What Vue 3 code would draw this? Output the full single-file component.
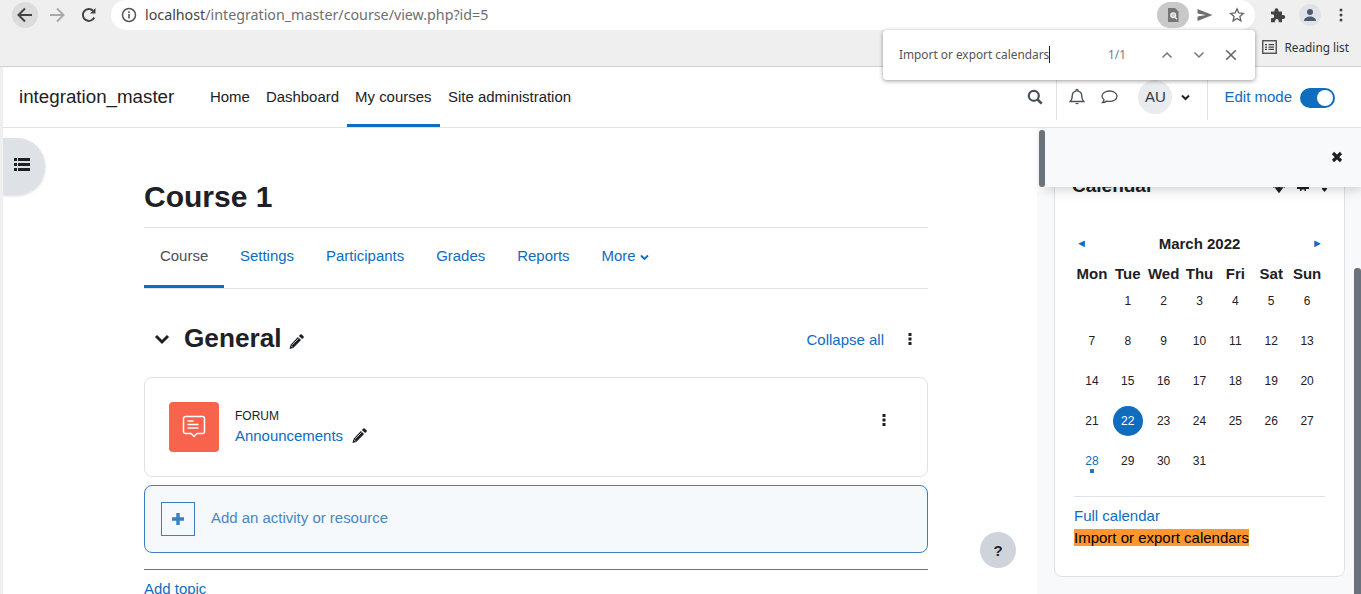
<script setup>
const navItems = [
  { label: 'Home' },
  { label: 'Dashboard' },
  { label: 'My courses', active: true },
  { label: 'Site administration' },
]
const tabs = ['Course', 'Settings', 'Participants', 'Grades', 'Reports']
const weekdays = ['Mon', 'Tue', 'Wed', 'Thu', 'Fri', 'Sat', 'Sun']
const days = ['', ...Array.from({ length: 31 }, (_, i) => i + 1)]
</script>

<template>
  <div class="screen">
    <header class="chrome">
      <div class="toolbar">
        <button class="round back">
          <svg width="18" height="18" viewBox="0 0 18 18"><path d="M16 9H3M9 2.500 2.500 9 9 15.500" fill="none" stroke="#444" stroke-width="2"/></svg>
        </button>
        <button class="round fwd">
          <svg width="18" height="18" viewBox="0 0 18 18"><path d="M2 9h13M9 2.500 15.500 9 9 15.500" fill="none" stroke="#aaa" stroke-width="2"/></svg>
        </button>
        <button class="round reload">
          <svg width="18" height="18" viewBox="0 0 18 18"><path d="M14.300 11.500A6 6 0 1 1 13.200 4.700" fill="none" stroke="#444" stroke-width="2"/><path d="M15.500 2v5.500H10z" fill="#444"/></svg>
        </button>
        <div class="omnibox">
          <svg class="info" width="16" height="16" viewBox="0 0 16 16"><circle cx="8" cy="8" r="6.500" fill="none" stroke="#555" stroke-width="1.500"/><path d="M7.200 7h1.600v4.500H7.200zM7.200 4.300h1.600v1.600H7.200z" fill="#555"/></svg>
          <span class="url"><span class="host">localhost</span>/integration_master/course/view.php?id=5</span>
          <span class="omni-actions">
            <span class="find-pill">
              <svg width="16" height="16" viewBox="0 0 16 16"><path d="M3 1h7l3.500 3.500V15H3z" fill="#757575"/><circle cx="8.200" cy="8.300" r="2.400" fill="#c9c9c9" stroke="#eee" stroke-width="1.300"/><path d="m10 10.200 2 2" stroke="#eee" stroke-width="1.300"/></svg>
            </span>
            <span class="omni-icon">
              <svg width="16" height="16" viewBox="0 0 16 16"><path d="M.5 2 15.500 8 .5 14V9.500L9 8 .5 6.500z" fill="#6e6e6e"/></svg>
            </span>
            <span class="omni-icon">
              <svg width="16" height="16" viewBox="0 0 16 16"><path d="m8 1.800 1.800 4.200 4.500.4-3.400 3 1 4.400L8 11.500l-3.900 2.300 1-4.400-3.400-3 4.500-.4z" fill="none" stroke="#5f6368" stroke-width="1.300"/></svg>
            </span>
          </span>
        </div>
        <div class="ext">
          <svg width="16" height="16" viewBox="0 0 16 16"><path d="M1 4.500h3.500V3.200a2 2 0 0 1 4 0v1.300H12V8h1.200a2 2 0 0 1 0 4H12v3.200H8.700v-1.300a1.800 1.800 0 0 0-3.600 0v1.300H1v-4h1.200a2 2 0 0 0 0-4H1z" fill="#444"/></svg>
          <span class="profile">
            <svg width="14" height="14" viewBox="0 0 14 14"><circle cx="7" cy="4" r="3" fill="#4d5a70"/><path d="M1 13c0-3 3-4.500 6-4.500s6 1.500 6 4.500z" fill="#4d5a70"/></svg>
          </span>
          <svg width="4" height="14" viewBox="0 0 4 14"><circle cx="2" cy="2" r="1.500" fill="#444"/><circle cx="2" cy="7" r="1.500" fill="#444"/><circle cx="2" cy="12" r="1.500" fill="#444"/></svg>
        </div>
      </div>
      <div class="bookmarks">
        <svg width="15" height="14" viewBox="0 0 15 14"><rect x=".75" y=".75" width="13.500" height="12.500" fill="none" stroke="#444" stroke-width="1.300"/><path d="M3 4h2v1.300H3zM6.500 4H12v1.300H6.500zM3 6.400h2v1.300H3zM6.500 6.400H12v1.300H6.500zM3 8.800h2v1.300H3zM6.500 8.800H12v1.300H6.500z" fill="#444"/></svg>
        <span>Reading list</span>
      </div>
    </header>

    <div class="findbar">
      <span class="find-text">Import or export calendars</span>
      <span class="find-count">1/1</span>
      <span class="find-sep"></span>
      <svg class="find-btn" width="12" height="8" viewBox="0 0 12 8"><path d="M1.500 6.500 6 2l4.500 4.500" fill="none" stroke="#777" stroke-width="1.500"/></svg>
      <svg class="find-btn" width="12" height="8" viewBox="0 0 12 8"><path d="M1.500 1.500 6 6l4.500-4.500" fill="none" stroke="#777" stroke-width="1.500"/></svg>
      <svg class="find-btn" width="12" height="12" viewBox="0 0 12 12"><path d="m1.200 1.200 9.600 9.600M10.800 1.200l-9.600 9.600" fill="none" stroke="#666" stroke-width="1.600"/></svg>
    </div>

    <div class="page">
      <nav class="navbar">
        <span class="brand">integration_master</span>
        <ul class="primary">
          <li v-for="item in navItems" :key="item.label" :class="{ active: item.active }">{{ item.label }}</li>
        </ul>
        <div class="nav-right">
          <svg class="search" width="16" height="16" viewBox="0 0 16 16"><circle cx="6.800" cy="6.800" r="5" fill="none" stroke="#495057" stroke-width="2.200"/><path d="m10.500 10.500 4.200 4.200" stroke="#495057" stroke-width="2.600"/></svg>
          <span class="nav-sep"></span>
          <svg class="bell" width="16" height="18" viewBox="0 0 16 18"><path d="M8 1.500a1 1 0 0 1 1 1v.6c2.400.5 3.700 2.500 3.700 4.700 0 3.200.8 4.300 2 5.700H1.300c1.200-1.400 2-2.500 2-5.700 0-2.200 1.300-4.200 3.700-4.700v-.6a1 1 0 0 1 1-1z" fill="none" stroke="#495057" stroke-width="1.400"/><path d="M6.200 15a1.900 1.900 0 0 0 3.600 0z" fill="#495057"/></svg>
          <svg class="chat" width="17" height="14" viewBox="0 0 17 14"><path d="M8.500 1C4.500 1 1 3.300 1 6.300c0 1.400.8 2.600 2 3.500-.2 1-.8 2-1.500 2.800 1.500-.1 3-.7 4.200-1.500.9.200 1.800.3 2.800.3 4 0 7.500-2.100 7.500-5.100S12.500 1 8.500 1z" fill="none" stroke="#495057" stroke-width="1.300"/></svg>
          <span class="avatar">AU</span>
          <svg class="caret" width="9" height="7" viewBox="0 0 9 7"><path d="m1 1.500 3.500 3.500L8 1.500" fill="none" stroke="#1d2125" stroke-width="2"/></svg>
          <span class="nav-sep second"></span>
          <span class="edit-label">Edit mode</span>
          <span class="toggle"><span class="knob"></span></span>
        </div>
      </nav>

      <div class="body">
        <main class="main">
          <div class="drawer-toggle">
            <svg width="16" height="13" viewBox="0 0 16 13"><path d="M0 0h3v3H0zM4 0h12v3H4zM0 5h3v3H0zM4 5h12v3H4zM0 10h3v3H0zM4 10h12v3H4z" fill="#1d2125"/></svg>
          </div>
          <h1 class="title">Course 1</h1>
          <div class="tabs">
            <span v-for="(t, i) in tabs" :key="t" class="tab" :class="{ current: i === 0 }">{{ t }}</span>
            <span class="tab">More
              <svg width="9" height="7" viewBox="0 0 9 7"><path d="m1 1.500 3.500 3.500L8 1.500" fill="none" stroke="#0f6cbf" stroke-width="1.800"/></svg>
            </span>
          </div>
          <div class="section-head">
            <svg class="sec-caret" width="16" height="11" viewBox="0 0 16 11"><path d="m2 2 6 6 6-6" fill="none" stroke="#1d2125" stroke-width="3"/></svg>
            <h2 class="section-title">General</h2>
            <svg class="pencil" width="15" height="15" viewBox="0 0 15 15"><path d="M11.300.5a1 1 0 0 1 1.400 0l1.800 1.800a1 1 0 0 1 0 1.400l-1.400 1.400-3.200-3.200z" fill="#1d2125"/><path d="M8.900 2.900l3.200 3.200-7.800 7.800-3.800 1 .9-3.900z" fill="#1d2125"/><path d="M9.500 4.500l-6.300 6.300" stroke="#fff" stroke-width=".7"/><path d="M1.500 11.200l2.300 2.300" stroke="#fff" stroke-width=".7"/></svg>
            <span class="collapse">Collapse all</span>
            <svg class="kebab" width="4" height="14" viewBox="0 0 4 14"><path d="M.5 1h3v3h-3zM.5 5.500h3v3h-3zM.5 10h3v3h-3z" fill="#1d2125"/></svg>
          </div>
          <div class="activity">
            <div class="act-icon">
              <svg width="24" height="24" viewBox="0 0 24 24"><path d="M3.500 1.500h17a2 2 0 0 1 2 2v13a2 2 0 0 1-2 2h-5.500L12 21.500l-3-3H3.500a2 2 0 0 1-2-2v-13a2 2 0 0 1 2-2z" fill="none" stroke="#fff" stroke-width="1.500"/><path d="M5.500 6h6M5.500 9.500h11M5.500 13h11" stroke="#fff" stroke-width="1.500"/></svg>
            </div>
            <div class="act-text">
              <div class="act-type">FORUM</div>
              <div class="act-name">Announcements
                <svg width="15" height="15" viewBox="0 0 15 15"><path d="M11.300.5a1 1 0 0 1 1.400 0l1.800 1.800a1 1 0 0 1 0 1.400l-1.400 1.400-3.200-3.200z" fill="#1d2125"/><path d="M8.900 2.900l3.200 3.200-7.800 7.800-3.800 1 .9-3.900z" fill="#1d2125"/><path d="M9.500 4.500l-6.300 6.300" stroke="#fff" stroke-width=".7"/><path d="M1.500 11.200l2.300 2.300" stroke="#fff" stroke-width=".7"/></svg>
              </div>
            </div>
            <svg class="act-kebab" width="4" height="14" viewBox="0 0 4 14"><path d="M.5 1h3v3h-3zM.5 5.500h3v3h-3zM.5 10h3v3h-3z" fill="#1d2125"/></svg>
          </div>
          <div class="add-activity">
            <span class="plus-box">
              <svg width="14" height="14" viewBox="0 0 14 14"><path d="M7 1v12M1 7h12" stroke="#3a80c0" stroke-width="3.400"/></svg>
            </span>
            <span class="add-label">Add an activity or resource</span>
          </div>
          <div class="add-topic">Add topic</div>
          <div class="help">?</div>
        </main>

        <aside class="drawer">
          <div class="block">
            <div class="block-head">
              <h3>Calendar</h3>
              <svg class="head-move" width="12" height="16" viewBox="0 0 12 16"><path d="M6 0v14M3 11l3 4 3-4z" stroke="#1d2125" stroke-width="1.500" fill="#1d2125"/><path d="M0 10h1.500M10.500 10H12" stroke="#1d2125"/></svg>
              <svg class="head-gear" width="12" height="14" viewBox="0 0 12 14"><path d="M0 10h12v2H9v2H7.500v-1.500h-3V14H3v-2H0z" fill="#1d2125"/></svg>
              <svg class="head-caret" width="5" height="4" viewBox="0 0 5 4"><path d="M0 0h5v1L2.500 4 0 1z" fill="#1d2125"/></svg>
            </div>
            <div class="month">
              <span class="arrow">◄</span>
              <span>March 2022</span>
              <span class="arrow">►</span>
            </div>
            <div class="cal">
              <span v-for="w in weekdays" :key="w" class="wd">{{ w }}</span>
              <span v-for="(d, i) in days" :key="i" class="day" :class="{ today: d === 22, event: d === 28 }">
                <span class="num">{{ d }}</span>
              </span>
            </div>
            <div class="block-foot">
              <div class="foot-link">Full calendar</div>
              <div class="foot-match"><mark>Import or export calendars</mark></div>
            </div>
          </div>
        </aside>

        <div class="drawer-head">
          <svg width="12" height="12" viewBox="0 0 12 12"><path d="m2 2 8 8M10 2l-8 8" stroke="#1d2125" stroke-width="3.200"/></svg>
        </div>
        <span class="thumb-a"></span>
        <span class="thumb-b"></span>
      </div>
    </div>
  </div>
</template>

<style>
html, body { margin: 0; overflow: hidden; background: #efefef; }
</style>

<style scoped>
.screen {
  position: relative;
  width: 1361px;
  height: 594px;
  overflow: hidden;
  background: #efefef;
  font-family: "Liberation Sans", Arial, sans-serif;
  font-size: 15px;
  color: #1d2125;
}
.chrome { height: 66px; font-family: "Noto Sans", sans-serif; border-bottom: 1px solid #d0d0d0; }
.toolbar { display: flex; align-items: center; height: 30px; padding-left: 12px; }
.round {
  width: 26px; height: 26px; padding: 0; border: 0; border-radius: 50%;
  background: none; display: flex; align-items: center; justify-content: center;
  margin-right: 6px;
}
.back { background: #dcdcdc; }
.omnibox {
  margin-left: 3px;
  width: 1144px; height: 30px;
  background: #fff; border-radius: 15px;
  display: flex; align-items: center; padding: 0 2px 0 10px; box-sizing: border-box;
}
.info { margin-right: 8px; flex: none; }
.url { font-size: 14.250px; color: #6e6e6e; white-space: nowrap; position: relative; top: -1px; }
.host { color: #444; }
.omni-actions { margin-left: auto; display: flex; align-items: center; }
.find-pill {
  width: 32px; height: 26px; border-radius: 13px; background: #c9c9c9;
  display: flex; align-items: center; justify-content: center;
}
.omni-icon { width: 32px; height: 26px; display: flex; align-items: center; justify-content: center; }
.ext { display: flex; align-items: center; margin-left: 15px; }
.profile {
  width: 22px; height: 22px; border-radius: 50%; background: #dfe3e8;
  display: flex; align-items: center; justify-content: center; margin: 0 18px 0 13px;
}
.bookmarks {
  height: 34px; display: flex; align-items: center; justify-content: flex-end; gap: 7px;
  padding-right: 12px; font-size: 11.800px; color: #333;
}
.findbar {
  position: absolute; left: 883px; top: 30px; width: 372px; height: 50px; box-sizing: border-box;
  background: #fff; border-radius: 4px; z-index: 5;
  box-shadow: 0 1px 4px rgba(0, 0, 0, .4);
  display: flex; align-items: center;
  font-family: "Noto Sans", sans-serif; font-size: 11.850px; color: #555;
  padding-left: 16px;
}
.find-text { width: 150px; border-right: 1px solid #222; line-height: 17px; white-space: nowrap; position: relative; top: -1px; }
.find-count { margin-left: 58px; color: #777; width: 17px; position: relative; top: -1px; }
.find-sep { width: 1px; height: 34px; background: #e2e2e2; margin-left: 17px; margin-right: 19px; }
.find-btn { margin-right: 20px; flex: none; }
.page { margin-left: 3px; background: #fff; }
.navbar {
  height: 60px; display: flex; align-items: center; border-bottom: 1px solid #dee2e6;
  padding-left: 16px;
}
.brand { font-size: 18.750px; width: 183px; white-space: nowrap; }
.primary { list-style: none; display: flex; margin: 0; padding: 0; height: 60px; }
.primary li {
  padding: 0 8px; line-height: 60px; box-sizing: border-box; height: 60px; white-space: nowrap; font-size: 14.960px;
}
.primary li.active { border-bottom: 3px solid #0f6cbf; width: 93px; }
.nav-right { margin-left: auto; display: flex; align-items: center; height: 60px; }
.search { margin-right: 13px; }
.nav-sep { width: 1px; height: 46px; background: #dee2e6; }
.bell { margin-left: 12px; }
.chat { margin-left: 16px; }
.avatar {
  width: 34px; height: 34px; border-radius: 50%; background: #e9ecef; margin-left: 20px;
  display: flex; align-items: center; justify-content: center; color: #343a40;
  box-sizing: border-box; padding-bottom: 2px;
}
.caret { margin-left: 9px; }
.nav-sep.second { margin-left: 17px; }
.edit-label { color: #0f6cbf; margin-left: 16px; position: relative; top: -1px; }
.toggle {
  width: 35px; height: 20px; border-radius: 10px; background: #0f6cbf; margin: 2px 26px 0 8px;
  position: relative; display: block;
}
.knob {
  position: absolute; right: 2px; top: 2px; width: 16px; height: 16px; border-radius: 50%; background: #fff;
}
.body { display: flex; position: relative; height: 467px; overflow: hidden; }
.main { width: 1034px; flex: none; padding-left: 141px; box-sizing: border-box; position: relative; background: #fff; }
.main > * { width: 784px; }
.main > .drawer-toggle {
  position: absolute; left: 0; top: 10px; width: 42px; height: 57px;
  background: #dee2e6; border-radius: 0 28px 28px 0;
  box-shadow: 0 1px 3px rgba(0, 0, 0, .15);
  display: flex; align-items: center; padding: 0 0 4px 11px; box-sizing: border-box;
}
.title {
  margin: 0; font-size: 30px; line-height: 38px; font-weight: 700; padding-top: 50px; padding-bottom: 11px;
  border-bottom: 1px solid #dee2e6;
}
.tabs { display: flex; height: 61px; border-bottom: 1px solid #dee2e6; box-sizing: border-box; }
.tab { color: #0f6cbf; padding: 0 16px; line-height: 56px; box-sizing: border-box; height: 60px; white-space: nowrap; font-size: 14.960px; }
.tab.current { color: #495057; border-bottom: 3px solid #0f6cbf; width: 80px; }
.section-head { display: flex; align-items: center; height: 60px; margin-top: 20px; position: relative; }
.sec-caret { margin-left: 10px; }
.section-title { margin: 0 0 2px 14px; font-size: 26.200px; font-weight: 700; }
.pencil { margin-left: 7px; margin-top: 4px; }
.collapse { margin-left: auto; color: #0f6cbf; }
.kebab { margin: 0 16px 0 24px; }
.activity {
  margin-top: 8px; height: 100px; box-sizing: border-box; border: 1px solid #dee2e6; border-radius: 8px;
  display: flex; align-items: center; padding-left: 24px; padding-right: 41px;
}
.act-icon {
  width: 50px; height: 50px; border-radius: 4px; background: #f7634d;
  display: flex; align-items: center; justify-content: center; flex: none;
}
.act-text { margin-left: 16px; }
.act-type { font-size: 12px; line-height: 16px; margin-bottom: 1px; padding-top: 1px; }
.act-name { color: #0f6cbf; line-height: 22px; font-size: 14.960px; }
.act-name svg { margin-left: 5px; vertical-align: -2px; }
.act-kebab { margin-left: auto; margin-top: -14px; }
.add-activity {
  margin-top: 8px; height: 68px; box-sizing: border-box;
  border: 1px solid #3a80c0; border-radius: 8px; background: #f5f9fc;
  display: flex; align-items: center; padding-left: 16px; gap: 16px; color: #4a86c5;
}
.add-label { font-size: 14.960px; line-height: 18px; margin-bottom: 2px; }
.plus-box {
  width: 34px; height: 34px; box-sizing: border-box; border: 1px solid #3a80c0;
  display: flex; align-items: center; justify-content: center;
}
.add-topic {
  margin-top: 16px; border-top: 1px solid #3a80c0; padding-top: 10px; color: #0f6cbf; line-height: 18px; font-size: 14.960px;
}
.main > .help {
  position: absolute; left: 977px; top: 404px; width: 36px; height: 36px; border-radius: 50%;
  background: #ced4da; display: flex; align-items: center; justify-content: center;
  font-weight: 700; font-size: 15px;
}
.drawer { flex: 1; background: #f8f9fa; padding-left: 17px; padding-top: 37px; box-sizing: border-box; }
.block {
  width: 291px; height: 412px; box-sizing: border-box; background: #fff;
  border: 1px solid #dee2e6; border-radius: 8px; padding: 0 19px;
}
.block-head { display: flex; align-items: flex-start; height: 32px; }
.block-head h3 { margin: 0 0 0 -2px; font-size: 19px; line-height: 24px; padding-top: 8px; font-weight: 700; }
.head-move { margin: 11px 0 0 120px; flex: none; }
.head-gear { margin: 11px 0 0 12px; flex: none; }
.head-caret { margin: 22px 0 0 13px; flex: none; }
.month {
  display: flex; justify-content: space-between; align-items: center; font-weight: 700; font-size: 15px;
  margin-top: 36px; height: 18px; padding: 0 2px;
}
.arrow { color: #0f6cbf; font-size: 11px; font-weight: 400; line-height: 18px; }
.cal { display: grid; grid-template-columns: repeat(7, 1fr); margin-top: 15px; width: 251px; }
.wd { font-weight: 700; font-size: 15px; text-align: center; height: 14px; line-height: 14px; }
.day { height: 40px; display: flex; align-items: center; justify-content: center; font-size: 12px; position: relative; }
.num { width: 30px; height: 30px; line-height: 30px; text-align: center; border-radius: 50%; }
.today .num { background: #0f6cbf; color: #fff; }
.event .num { color: #0f6cbf; }
.event::after {
  content: ""; position: absolute; left: 16px; bottom: 8px; width: 4px; height: 4px; background: #2f6fc4;
}
.block-foot { border-top: 1px solid #dee2e6; margin-top: 15px; padding-top: 10px; }
.foot-link { color: #0f6cbf; line-height: 18px; }
.foot-match { line-height: 17px; margin-top: 4px; }
mark { background: #ff9632; color: #000; }
.drawer-head {
  position: absolute; left: 1042px; top: 0; width: 316px; height: 59px; background: #f8f9fa;
  box-shadow: 0 2px 12px rgba(0, 0, 0, .2);
  display: flex; align-items: center; justify-content: flex-end; padding: 0 18px 2px 0; box-sizing: border-box;
}
.thumb-a { position: absolute; left: 1036px; top: 2px; width: 6px; height: 57px; background: #6a737b; border-radius: 3px; }
.thumb-b { position: absolute; right: 0; top: 140px; width: 7px; height: 330px; background: #6a737b; border-radius: 3px 3px 0 0; }
</style>
